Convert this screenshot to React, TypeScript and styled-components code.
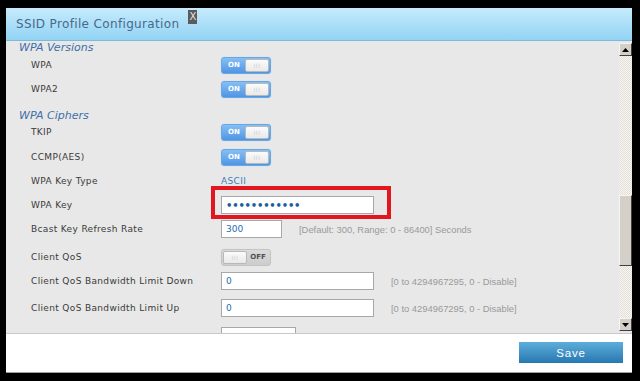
import React from "react";
import styled, { createGlobalStyle } from "styled-components";

const Global = createGlobalStyle`
  html, body { margin: 0; padding: 0; background: #000; }
  body { width: 640px; height: 381px; overflow: hidden; font-family: "DejaVu Sans", sans-serif; }
`;

const Screen = styled.div`
  width: 640px;
  height: 381px;
  box-sizing: border-box;
  padding: 8px 0 0 6px;
  background: #000;
`;

const Dialog = styled.div`
  width: 626px;
  height: 365px;
  display: flex;
  flex-direction: column;
  background: #fff;
`;

const Header = styled.div`
  height: 33px;
  box-sizing: border-box;
  display: flex;
  align-items: flex-start;
  padding: 0 0 0 10px;
  background: linear-gradient(#c6ebfc, #92d3f4);
  border-bottom: 1px solid #7fb9d8;
`;

const Title = styled.span`
  margin-top: 9px;
  font-family: "DejaVu Sans", sans-serif;
  font-size: 12px;
  line-height: 14px;
  letter-spacing: 0.35px;
  color: #46698c;
`;

const Close = styled.span`
  margin: 2px 0 0 9px;
  width: 9px;
  height: 14px;
  display: inline-flex;
  align-items: center;
  justify-content: center;
  background: #5b5b5b;
  color: #e4e4e4;
  font-family: "DejaVu Sans", sans-serif;
  font-size: 10px;
  line-height: 14px;
`;

const Body = styled.div`
  height: 292px;
  display: flex;
  background: #e8e8e8;
`;

const Scroll = styled.div`
  flex: 1;
  overflow: hidden;
  padding-left: 13px;
`;

const Heading = styled.div<{ $mt: number }>`
  margin-top: ${(p) => p.$mt}px;
  height: 14px;
  line-height: 14px;
  font-family: "DejaVu Sans", sans-serif;
  font-size: 11px;
  font-style: italic;
  color: #3d6fa8;
`;

const Row = styled.div<{ $mt: number }>`
  margin-top: ${(p) => p.$mt}px;
  height: 18px;
  display: flex;
  align-items: center;
  padding-left: 12px;
`;

const Label = styled.span`
  width: 190px;
  flex: none;
  font-family: "DejaVu Sans", sans-serif;
  font-size: 9px;
  letter-spacing: 0.35px;
  color: #3a3a3a;
`;

const Value = styled.span`
  font-family: "DejaVu Sans", sans-serif;
  font-size: 9px;
  letter-spacing: 0.35px;
  color: #3f7fbf;
`;

const Toggle = styled.div<{ $on: boolean }>`
  width: 50px;
  height: 17px;
  box-sizing: border-box;
  display: flex;
  flex-direction: ${(p) => (p.$on ? "row" : "row-reverse")};
  padding: 1px;
  border-radius: 3px;
  border: 1px solid ${(p) => (p.$on ? "#6aa6e0" : "#c4c4c4")};
  background: ${(p) =>
    p.$on ? "linear-gradient(#86bff6, #4f95e4)" : "linear-gradient(#dadada, #cdcdcd)"};
  box-shadow: 0 0 1px ${(p) => (p.$on ? "#9cc6ee" : "#d8d8d8")};
`;

const ToggleText = styled.span<{ $on: boolean }>`
  flex: 1;
  display: flex;
  align-items: center;
  justify-content: center;
  font-family: "DejaVu Sans", sans-serif;
  font-weight: bold;
  font-size: 7px;
  color: ${(p) => (p.$on ? "#ffffff" : "#505050")};
`;

const Knob = styled.span`
  width: 24px;
  box-sizing: border-box;
  display: flex;
  align-items: center;
  justify-content: center;
  border-radius: 2px;
  border: 1px solid #b9b9b9;
  background: linear-gradient(#fbfbfb, #e9e9e9);
  color: #cfcfcf;
  font-family: "DejaVu Sans", sans-serif;
  font-size: 6px;
  letter-spacing: 0.5px;
`;

const TextInput = styled.input<{ $w: number }>`
  width: ${(p) => p.$w}px;
  height: 18px;
  box-sizing: border-box;
  margin: 0;
  padding: 0 0 0 4px;
  border: 1px solid #a8a8a8;
  background: #fff;
  font-family: "DejaVu Sans", sans-serif;
  font-size: 9px;
  color: #1f6cb0;
  outline: none;
`;

const KeyInput = styled(TextInput)`
  font-size: 10px;
  font-weight: bold;
  letter-spacing: -0.2px;
  color: #1a5f9e;
`;

const Marked = styled.div`
  position: relative;
  display: flex;
`;

const RedBox = styled.span`
  position: absolute;
  left: -10px;
  top: -10px;
  width: 180px;
  height: 33px;
  box-sizing: border-box;
  border: 4px solid #e2161f;
  pointer-events: none;
`;

const Hint = styled.span`
  margin-left: 17px;
  font-family: "Liberation Sans", sans-serif;
  font-size: 9.4px;
  color: #9a9a9a;
  white-space: nowrap;
`;

const ScrollBar = styled.div`
  width: 13px;
  flex: none;
  box-sizing: border-box;
  padding: 2px 0;
  display: flex;
  flex-direction: column;
`;

const ScrollButton = styled.div`
  height: 13px;
  box-sizing: border-box;
  display: flex;
  align-items: center;
  justify-content: center;
  background: #d4d0c8;
  border: 1px solid;
  border-color: #f4f4f4 #404040 #404040 #f4f4f4;
`;

const Track = styled.div`
  flex: 1;
  padding-top: 139px;
  background-color: #f3f1ed;
  background-image: repeating-conic-gradient(#e3e0d9 0 25%, #f6f5f2 0 50%);
  background-size: 2px 2px;
`;

const Thumb = styled.div`
  height: 71px;
  box-sizing: border-box;
  background: #d4d0c8;
  border: 1px solid;
  border-color: #f4f4f4 #404040 #404040 #f4f4f4;
`;

const Footer = styled.div`
  height: 40px;
  box-sizing: border-box;
  display: flex;
  justify-content: flex-end;
  align-items: flex-start;
  padding: 8px 9px 0 0;
  background: #fff;
  border-top: 1px solid #c9c9c9;
  border-bottom: 1px solid #a0a0a0;
`;

const SaveButton = styled.button`
  width: 104px;
  height: 21px;
  margin: 0;
  padding: 0;
  border: none;
  background: linear-gradient(#5eaedb, #2777b2);
  color: #fff;
  font-family: "Liberation Sans", sans-serif;
  font-size: 11.5px;
  letter-spacing: 0.8px;
`;

const Arrow = ({ up }: { up: boolean }) => (
  <svg width="7" height="4" viewBox="0 0 7 4">
    <path d={up ? "M0 4 L3.5 0 L7 4 Z" : "M0 0 L3.5 4 L7 0 Z"} fill="#000" />
  </svg>
);

const Switch = ({ on }: { on: boolean }) => (
  <Toggle $on={on}>
    <ToggleText $on={on}>{on ? "ON" : "OFF"}</ToggleText>
    <Knob>III</Knob>
  </Toggle>
);

export default function App() {
  return (
    <Screen>
      <Global />
      <Dialog>
        <Header>
          <Title>SSID Profile Configuration</Title>
          <Close>X</Close>
        </Header>
        <Body>
          <Scroll>
            <Heading $mt={0}>WPA Versions</Heading>
            <Row $mt={1}>
              <Label>WPA</Label>
              <Switch on />
            </Row>
            <Row $mt={6}>
              <Label>WPA2</Label>
              <Switch on />
            </Row>
            <Heading $mt={11}>WPA Ciphers</Heading>
            <Row $mt={0}>
              <Label>TKIP</Label>
              <Switch on />
            </Row>
            <Row $mt={7}>
              <Label>CCMP(AES)</Label>
              <Switch on />
            </Row>
            <Row $mt={6}>
              <Label>WPA Key Type</Label>
              <Value>ASCII</Value>
            </Row>
            <Row $mt={6}>
              <Label>WPA Key</Label>
              <Marked>
                <KeyInput $w={153} readOnly value={"\u2022".repeat(12)} />
                <RedBox />
              </Marked>
            </Row>
            <Row $mt={6}>
              <Label>Bcast Key Refresh Rate</Label>
              <TextInput $w={61} readOnly value="300" />
              <Hint>[Default: 300, Range: 0 - 86400] Seconds</Hint>
            </Row>
            <Row $mt={10}>
              <Label>Client QoS</Label>
              <Switch on={false} />
            </Row>
            <Row $mt={6}>
              <Label>Client QoS Bandwidth Limit Down</Label>
              <TextInput $w={153} readOnly value="0" />
              <Hint>[0 to 4294967295, 0 - Disable]</Hint>
            </Row>
            <Row $mt={9}>
              <Label>Client QoS Bandwidth Limit Up</Label>
              <TextInput $w={153} readOnly value="0" />
              <Hint>[0 to 4294967295, 0 - Disable]</Hint>
            </Row>
            <Row $mt={10}>
              <Label />
              <TextInput $w={75} readOnly value="" />
            </Row>
          </Scroll>
          <ScrollBar>
            <ScrollButton>
              <Arrow up />
            </ScrollButton>
            <Track>
              <Thumb />
            </Track>
            <ScrollButton>
              <Arrow up={false} />
            </ScrollButton>
          </ScrollBar>
        </Body>
        <Footer>
          <SaveButton>Save</SaveButton>
        </Footer>
      </Dialog>
    </Screen>
  );
}
